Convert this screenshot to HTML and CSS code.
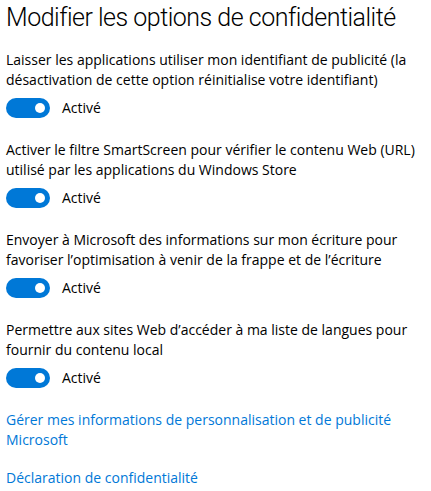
FILE: index.html
```html
<!DOCTYPE html>
<html lang="fr">
<head>
<meta charset="utf-8">
<link rel="stylesheet" href="styles.css">
</head>
<body>
<main class="page">
  <h1 class="title">Modifier les options de confidentialité</h1>
  <section class="option">
    <p class="desc">Laisser les applications utiliser mon identifiant de publicité (la désactivation de cette option réinitialise votre identifiant)</p>
    <div class="toggle-row"><span class="toggle"><span class="knob"></span></span><span class="state">Activé</span></div>
  </section>
  <section class="option">
    <p class="desc">Activer le filtre SmartScreen pour vérifier le contenu Web (URL) utilisé par les applications du Windows Store</p>
    <div class="toggle-row"><span class="toggle"><span class="knob"></span></span><span class="state">Activé</span></div>
  </section>
  <section class="option">
    <p class="desc">Envoyer à Microsoft des informations sur mon écriture pour favoriser l’optimisation à venir de la frappe et de l’écriture</p>
    <div class="toggle-row"><span class="toggle"><span class="knob"></span></span><span class="state">Activé</span></div>
  </section>
  <section class="option">
    <p class="desc">Permettre aux sites Web d’accéder à ma liste de langues pour fournir du contenu local</p>
    <div class="toggle-row"><span class="toggle"><span class="knob"></span></span><span class="state">Activé</span></div>
  </section>
  <nav class="links">
    <a class="link" href="#">Gérer mes informations de personnalisation et de publicité Microsoft</a>
    <a class="link" href="#">Déclaration de confidentialité</a>
  </nav>
</main>
</body>
</html>
```
FILE: styles.css
```css
html, body {
  margin: 0;
  padding: 0;
  background: #ffffff;
}
body {
  font-family: "Segoe UI", "Open Sans", "Noto Sans", sans-serif;
  color: #000000;
  font-size: 15px;
  line-height: 20px;
}
.page {
  padding: 0 6px;
  width: 419px;
  box-sizing: content-box;
}
.title {
  margin: 0;
  font-family: "Segoe UI Light", Roboto, "Open Sans", sans-serif;
  font-size: 25px;
  font-weight: 300;
  letter-spacing: -0.5px;
  line-height: 36px;
  white-space: nowrap;
  height: 50px;
}
.option {
  display: flex;
  flex-direction: column;
  gap: 8px;
  padding-bottom: 22px;
}
.desc {
  margin: 0;
  font-size: 14px;
}
.toggle-row {
  display: flex;
  align-items: center;
  gap: 12px;
  height: 20px;
}
.toggle {
  width: 44px;
  height: 20px;
  border-radius: 10px;
  background: #0078d7;
  display: flex;
  align-items: center;
  justify-content: flex-end;
  padding-right: 5px;
  box-sizing: border-box;
}
.knob {
  width: 10px;
  height: 10px;
  border-radius: 50%;
  background: #ffffff;
}
.state {
  font-size: 14px;
}
.links {
  display: flex;
  flex-direction: column;
  gap: 18px;
}
.link {
  color: #0078d7;
  text-decoration: none;
  font-size: 14px;
}
```
